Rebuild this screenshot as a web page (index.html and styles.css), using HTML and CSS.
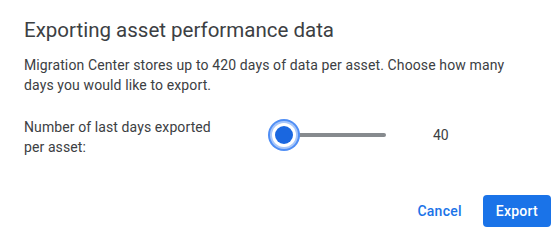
FILE: index.html
```html
<!DOCTYPE html>
<html lang="en">
<head>
<meta charset="utf-8">
<title>Exporting asset performance data</title>
<link rel="stylesheet" href="styles.css">
</head>
<body>
<div class="dialog">
  <h1 class="title">Exporting asset performance data</h1>
  <p class="desc">Migration Center stores up to 420 days of data per asset. Choose how many days you would like to export.</p>
  <div class="field">
    <label class="label">Number of last days exported per asset:</label>
    <div class="slider">
      <div class="track"></div>
      <div class="thumb"></div>
    </div>
    <div class="value">40</div>
  </div>
  <div class="actions">
    <button class="btn btn-text">Cancel</button>
    <button class="btn btn-filled">Export</button>
  </div>
</div>
</body>
</html>
```

FILE: styles.css
```css
html, body {
  margin: 0;
  padding: 0;
  background: #fff;
}
body {
  font-family: Roboto, "Liberation Sans", Arial, sans-serif;
  color: #3c4043;
}
.dialog {
  padding: 16px 6px 0 24px;
}
.title {
  margin: 0;
  font-size: 20.5px;
  line-height: 28px;
  font-weight: 400;
  color: #3c4043;
}
.desc {
  margin: 11px 0 0 0;
  font-size: 14px;
  line-height: 20px;
  letter-spacing: 0.12px;
  width: 505px;
}
.field {
  display: flex;
  align-items: flex-start;
  margin-top: 22px;
  height: 40px;
}
.label {
  width: 200px;
  font-size: 14px;
  line-height: 20px;
  letter-spacing: 0.1px;
}
.slider {
  position: relative;
  width: 120px;
  height: 36px;
  margin-left: 44px;
}
.track {
  position: absolute;
  left: 8px;
  right: 2px;
  top: 16px;
  height: 4px;
  border-radius: 2px;
  background: #868a8e;
}
.thumb {
  position: absolute;
  left: 7px;
  top: 9px;
  width: 18px;
  height: 18px;
  border-radius: 50%;
  background: #1a67e0;
  box-shadow: 0 0 0 3px #fff, 0 0 0 5px #a8c7fa, 0 0 0 7px #4f8ef5;
}
.value {
  margin-left: 45px;
  font-size: 14px;
  line-height: 36px;
  color: #3c4043;
}
.actions {
  display: flex;
  justify-content: flex-end;
  gap: 8px;
  margin-top: 38px;
}
.btn {
  font-family: Roboto, "Liberation Sans", Arial, sans-serif;
  font-size: 14px;
  font-weight: 500;
  letter-spacing: 0.25px;
  height: 32px;
  padding: 0 13px;
  border-radius: 4px;
  border: none;
  cursor: pointer;
}
.btn-text {
  background: transparent;
  color: #1a73e8;
}
.btn-filled {
  background: #1a73e8;
  color: #fff;
}
```
